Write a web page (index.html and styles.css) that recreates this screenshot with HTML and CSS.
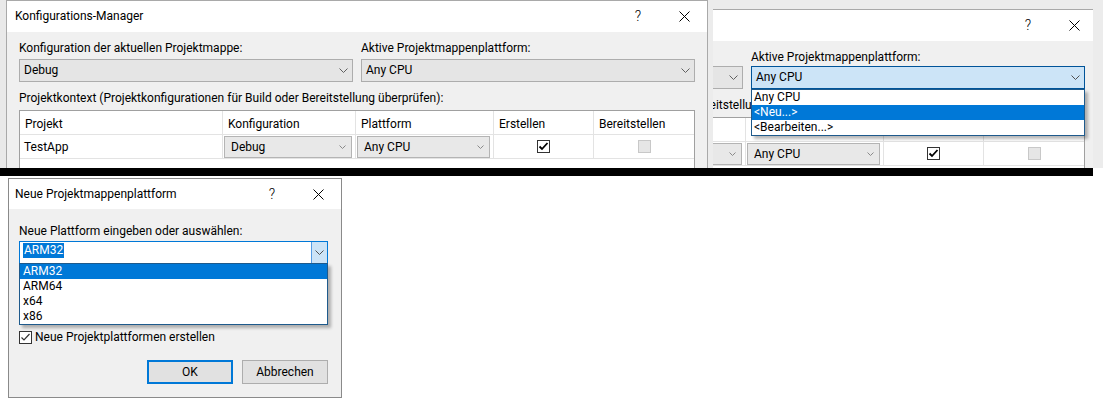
FILE: index.html
```html
<!DOCTYPE html>
<html lang="de">
<head>
<meta charset="utf-8">
<title>Konfigurations-Manager</title>
<link rel="stylesheet" href="styles.css">
</head>
<body>
<div class="desk">

  <!-- Window A: Konfigurations-Manager -->
  <div class="win win-a">
    <div class="dlg cm">
      <div class="titlebar">
        <span class="title">Konfigurations-Manager</span>
        <span class="tb-btn help">?</span>
        <span class="tb-btn close"><svg width="11" height="11" viewBox="0 0 11 11"><path d="M0.5 0.5L10.5 10.5M10.5 0.5L0.5 10.5" stroke="#000" stroke-width="1" fill="none"/></svg></span>
      </div>
      <div class="cm-body">
        <div class="cm-fields">
          <div class="field">
            <div class="lbl">Konfiguration der aktuellen Projektmappe:</div>
            <div class="combo"><span class="combo-text">Debug</span><svg class="chev" width="9" height="5" viewBox="0 0 9 5"><path d="M0.5 0.5L4.5 4.5L8.5 0.5" stroke="#606060" fill="none"/></svg></div>
          </div>
          <div class="field">
            <div class="lbl">Aktive Projektmappenplattform:</div>
            <div class="combo"><span class="combo-text">Any CPU</span><svg class="chev" width="9" height="5" viewBox="0 0 9 5"><path d="M0.5 0.5L4.5 4.5L8.5 0.5" stroke="#606060" fill="none"/></svg></div>
          </div>
        </div>
        <div class="lbl ctx">Projektkontext (Projektkonfigurationen für Build oder Bereitstellung überprüfen):</div>
        <div class="grid">
          <div class="gh">Projekt</div>
          <div class="gh">Konfiguration</div>
          <div class="gh">Plattform</div>
          <div class="gh">Erstellen</div>
          <div class="gh last">Bereitstellen</div>
          <div class="gc">TestApp</div>
          <div class="gc gc-combo"><div class="mini-combo"><span class="combo-text">Debug</span><svg class="mini-chev" width="7" height="4" viewBox="0 0 7 4"><path d="M0.5 0.5L3.5 3.5L6.5 0.5" stroke="#8a8a8a" fill="none"/></svg></div></div>
          <div class="gc gc-combo"><div class="mini-combo"><span class="combo-text">Any CPU</span><svg class="mini-chev" width="7" height="4" viewBox="0 0 7 4"><path d="M0.5 0.5L3.5 3.5L6.5 0.5" stroke="#8a8a8a" fill="none"/></svg></div></div>
          <div class="gc gc-center"><span class="chk"><svg width="11" height="11" viewBox="0 0 11 11"><path d="M1.5 5.5L4 8L9.5 2" stroke="#000" stroke-width="1.8" fill="none"/></svg></span></div>
          <div class="gc gc-center last"><span class="chk chk-off"></span></div>
        </div>
      </div>
    </div>
  </div>

  <!-- Window B: same dialog cropped, platform list open -->
  <div class="win win-b">
    <div class="clip-b">
      <div class="dlg cm cm-b">
        <div class="titlebar">
          <span class="title off">Konfigurations-Manager</span>
          <span class="tb-btn help">?</span>
          <span class="tb-btn close"><svg width="11" height="11" viewBox="0 0 11 11"><path d="M0.5 0.5L10.5 10.5M10.5 0.5L0.5 10.5" stroke="#000" stroke-width="1" fill="none"/></svg></span>
        </div>
        <div class="cm-body">
          <div class="cm-fields">
            <div class="field">
              <div class="lbl off">Konfiguration der aktuellen Projektmappe:</div>
              <div class="combo"><span class="combo-text off">Debug</span><svg class="chev" width="9" height="5" viewBox="0 0 9 5"><path d="M0.5 0.5L4.5 4.5L8.5 0.5" stroke="#606060" fill="none"/></svg></div>
            </div>
            <div class="field">
              <div class="lbl">Aktive Projektmappenplattform:</div>
              <div class="combo focus"><span class="combo-text">Any CPU</span><svg class="chev" width="9" height="5" viewBox="0 0 9 5"><path d="M0.5 0.5L4.5 4.5L8.5 0.5" stroke="#505050" fill="none"/></svg>
                <ul class="dd">
                  <li>Any CPU</li>
                  <li class="sel">&lt;Neu...&gt;</li>
                  <li>&lt;Bearbeiten...&gt;</li>
                </ul>
              </div>
            </div>
          </div>
          <div class="lbl ctx"><span class="off">Projektkontext (Projektkonfigurationen für Build oder Ber</span>eitstellu<span class="off">ng überprüfen):</span></div>
          <div class="grid">
            <div class="gh"><span class="off">Projekt</span></div>
            <div class="gh"><span class="off">Konfiguration</span></div>
            <div class="gh"><span class="off">Plattform</span></div>
            <div class="gh"><span class="off">Erstellen</span></div>
            <div class="gh last"><span class="off">Bereitstellen</span></div>
            <div class="gc"><span class="off">TestApp</span></div>
            <div class="gc gc-combo"><div class="mini-combo"><span class="combo-text off">Debug</span><svg class="mini-chev" width="7" height="4" viewBox="0 0 7 4"><path d="M0.5 0.5L3.5 3.5L6.5 0.5" stroke="#8a8a8a" fill="none"/></svg></div></div>
            <div class="gc gc-combo"><div class="mini-combo"><span class="combo-text">Any CPU</span><svg class="mini-chev" width="7" height="4" viewBox="0 0 7 4"><path d="M0.5 0.5L3.5 3.5L6.5 0.5" stroke="#8a8a8a" fill="none"/></svg></div></div>
            <div class="gc gc-center"><span class="chk"><svg width="11" height="11" viewBox="0 0 11 11"><path d="M1.5 5.5L4 8L9.5 2" stroke="#000" stroke-width="1.8" fill="none"/></svg></span></div>
            <div class="gc gc-center last"><span class="chk chk-off"></span></div>
          </div>
        </div>
      </div>
    </div>
  </div>

  <div class="bar"></div>

  <!-- Window C: Neue Projektmappenplattform -->
  <div class="win win-c">
    <div class="dlg np">
      <div class="titlebar tb-np">
        <span class="title">Neue Projektmappenplattform</span>
        <span class="tb-btn help">?</span>
        <span class="tb-btn close"><svg width="11" height="11" viewBox="0 0 11 11"><path d="M0.5 0.5L10.5 10.5M10.5 0.5L0.5 10.5" stroke="#000" stroke-width="1" fill="none"/></svg></span>
      </div>
      <div class="np-body">
        <div class="lbl">Neue Plattform eingeben oder auswählen:</div>
        <div class="ecombo">
          <div class="ecombo-field"><span class="sel-text">ARM32</span></div>
          <div class="ecombo-btn"><svg width="9" height="5" viewBox="0 0 9 5"><path d="M0.5 0.5L4.5 4.5L8.5 0.5" stroke="#505050" fill="none"/></svg></div>
          <ul class="dd dd-np">
            <li class="sel">ARM32</li>
            <li>ARM64</li>
            <li>x64</li>
            <li>x86</li>
          </ul>
        </div>
        <div class="cb-row"><span class="cb"><svg width="11" height="11" viewBox="0 0 11 11"><path d="M1.5 5.5L4 8L9.5 2" stroke="#333" stroke-width="1.2" fill="none"/></svg></span><span>Neue Projektplattformen erstellen</span></div>
        <div class="btn-row">
          <div class="btn btn-default">OK</div>
          <div class="btn">Abbrechen</div>
        </div>
      </div>
    </div>
  </div>

</div>
</body>
</html>
```
FILE: styles.css
```css
* { box-sizing: border-box; margin: 0; padding: 0; }
html, body { width: 1103px; height: 405px; overflow: hidden; background: #fff; }
body {
  font-family: Roboto, "Liberation Sans", sans-serif;
  font-size: 12px;
  line-height: 15px;
  color: #000;
}
.desk { position: relative; width: 1103px; height: 405px; }

/* windows on the screenshot canvas */
.win { position: absolute; overflow: hidden; }
.win-a { left: 0; top: 0; width: 708px; height: 168px; background: #e9e9e9; padding-left: 6px; }
.win-b { left: 708px; top: 0; width: 395px; height: 168px; background: #ececec; }
.clip-b { position: absolute; left: 5px; top: 0; width: 380px; height: 168px; overflow: hidden; }
.clip-b .cm { margin-left: -317px; margin-top: 9px; }
.win-c { left: 8px; top: 178px; width: 334px; height: 220px; }
.bar { position: absolute; left: 0; top: 168px; width: 1093px; height: 8px; background: #000; }

/* parts of the cropped copy that lie outside its crop or under its list */
.off { visibility: hidden; }

/* dialog chrome */
.dlg { background: #f0f0f0; border: 1px solid #a9a9a9; }
.titlebar { display: flex; align-items: center; background: #fff; height: 31px; }
.title { flex: 1; padding-left: 8px; white-space: nowrap; }
.tb-btn { width: 46px; height: 100%; display: flex; align-items: center; justify-content: center; }
.help { font-size: 14px; font-weight: 300; }

/* Konfigurations-Manager */
.cm { width: 702px; height: 200px; border-bottom: 0; }
.cm-body { padding: 8px 12px 0 12px; }
.cm-fields { display: grid; grid-template-columns: 334px 334px; column-gap: 8px; }
.lbl { line-height: 16px; white-space: nowrap; }
.combo {
  position: relative;
  margin-top: 3px;
  height: 23px;
  display: flex;
  align-items: center;
  background: #e5e5e5;
  border: 1px solid #adadad;
  padding: 0 4px 0 4px;
}
.combo-text { flex: 1; white-space: nowrap; }
.combo.focus { background: #cce4f7; border-color: #005499; }
.cm-b .combo { margin-top: 1px; }
.ctx { margin-top: 8px; }

.grid {
  margin-top: 4px;
  display: grid;
  grid-template-columns: 203px 133px 138px 100px 100px;
  grid-auto-rows: 24px;
  background: #fff;
  border: 1px solid #a0a0a0;
  height: 90px;
  align-content: start;
}
.gh, .gc { border-right: 1px solid #e3e3e3; border-bottom: 1px solid #e3e3e3; white-space: nowrap; }
.gh { padding: 6px 0 0 5px; }
.gc { padding: 5px 0 0 4px; display: flex; }
.gh.last, .gc.last { border-right: 0; }
.gc-combo { padding: 1px 3px 0 1px; }
.gc-center { padding: 0; align-items: center; justify-content: center; }
.mini-combo {
  flex: 1;
  height: 22px;
  display: flex;
  align-items: center;
  background: #e8e8e8;
  border: 1px solid #b4b4b4;
  padding: 0 5px 0 6px;
}
.chk {
  width: 13px; height: 13px;
  border: 1px solid #333;
  background: #fff;
  display: flex; align-items: center; justify-content: center;
}
.chk-off { background: #e6e6e6; border-color: #c8c8c8; }

/* drop-down lists */
.dd {
  position: absolute;
  left: -1px; right: -1px;
  top: calc(100% + 1px);
  list-style: none;
  background: #fff;
  border: 1px solid #1e5a8c;
  box-shadow: 3px 3px 3px rgba(0, 0, 0, 0.28);
  z-index: 5;
}
.dd li { height: 15px; line-height: 15px; padding-left: 2px; white-space: nowrap; }
.dd li.sel { background: #0078d7; color: #fff; }

/* Neue Projektmappenplattform */
.np { width: 334px; height: 220px; border-color: #8a8a8a; }
.tb-np { height: 30px; }
.tb-np .title { padding-left: 6px; }
.np-body { padding: 14px 13px 0 10px; }
.ecombo {
  position: relative;
  margin-top: 2px;
  height: 23px;
  display: flex;
  background: #fff;
  border: 1px solid #0078d7;
}
.ecombo-field { flex: 1; padding: 1px 0 0 3px; }
.sel-text { display: inline-block; background: #0078d7; color: #fff; padding: 0 1px; line-height: 15px; }
.ecombo-btn {
  width: 16px;
  background: #cce4f7;
  border-left: 1px solid #569de5;
  display: flex; align-items: center; justify-content: center;
}
.dd-np { top: 100%; padding-left: 0; }
.dd-np li { padding-left: 3px; }
.cb-row { display: flex; align-items: center; gap: 3px; margin-top: 66px; height: 15px; white-space: nowrap; }
.cb {
  width: 13px; height: 13px;
  border: 1px solid #333;
  background: #fff;
  display: flex; align-items: center; justify-content: center;
}
.btn-row { display: flex; justify-content: flex-end; gap: 9px; margin-top: 15px; }
.btn {
  width: 86px; height: 24px;
  border: 1px solid #adadad;
  background: #e1e1e1;
  text-align: center;
  line-height: 22px;
}
.btn-default { border: 2px solid #0078d7; line-height: 20px; }
```
